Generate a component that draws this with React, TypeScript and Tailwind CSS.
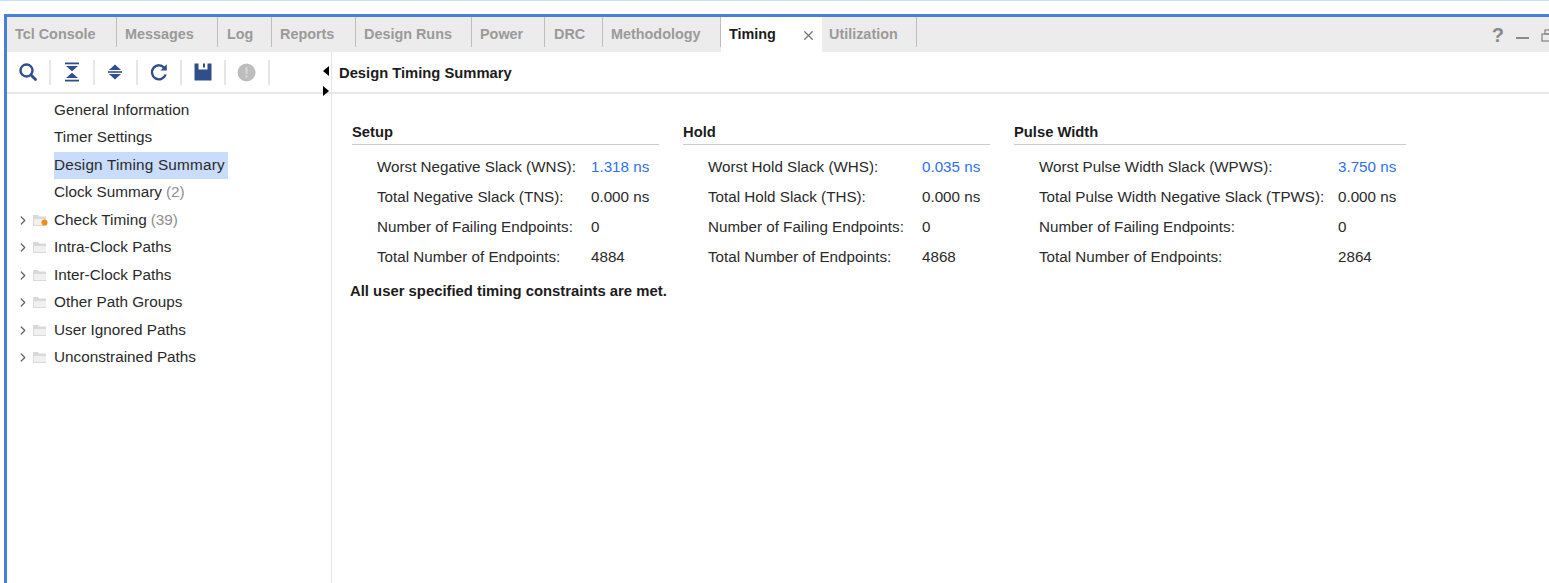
import { ChevronRight, X } from 'lucide-react'

const tabs = [
  { label: 'Tcl Console', width: 'w-[110px]', pad: 'pl-[8px]' },
  { label: 'Messages', width: 'w-[101px]', pad: 'pl-[8px]' },
  { label: 'Log', width: 'w-[54px]', pad: 'pl-[9px]' },
  { label: 'Reports', width: 'w-[84px]', pad: 'pl-[8px]' },
  { label: 'Design Runs', width: 'w-[116px]', pad: 'pl-[8px]' },
  { label: 'Power', width: 'w-[73px]', pad: 'pl-[8px]' },
  { label: 'DRC', width: 'w-[58px]', pad: 'pl-[9px]' },
  { label: 'Methodology', width: 'w-[118px]', pad: 'pl-[8px]' },
]

const treeLeaves = [
  { label: 'General Information' },
  { label: 'Timer Settings' },
  { label: 'Design Timing Summary', selected: true },
  { label: 'Clock Summary', count: '(2)' },
]

const treeFolders = [
  { label: 'Check Timing', count: '(39)', warn: true },
  { label: 'Intra-Clock Paths' },
  { label: 'Inter-Clock Paths' },
  { label: 'Other Path Groups' },
  { label: 'User Ignored Paths' },
  { label: 'Unconstrained Paths' },
]

const sections = [
  {
    title: 'Setup',
    width: 'w-[307px]',
    labelWidth: 'w-[214px]',
    rows: [
      ['Worst Negative Slack (WNS):', '1.318 ns', true],
      ['Total Negative Slack (TNS):', '0.000 ns'],
      ['Number of Failing Endpoints:', '0'],
      ['Total Number of Endpoints:', '4884'],
    ],
  },
  {
    title: 'Hold',
    width: 'w-[307px]',
    labelWidth: 'w-[214px]',
    rows: [
      ['Worst Hold Slack (WHS):', '0.035 ns', true],
      ['Total Hold Slack (THS):', '0.000 ns'],
      ['Number of Failing Endpoints:', '0'],
      ['Total Number of Endpoints:', '4868'],
    ],
  },
  {
    title: 'Pulse Width',
    width: 'w-[392px]',
    labelWidth: 'w-[299px]',
    rows: [
      ['Worst Pulse Width Slack (WPWS):', '3.750 ns', true],
      ['Total Pulse Width Negative Slack (TPWS):', '0.000 ns'],
      ['Number of Failing Endpoints:', '0'],
      ['Total Number of Endpoints:', '2864'],
    ],
  },
]

function Sep() {
  return <div className="h-[25px] w-[2px] bg-[#e6e6e6]" />
}

function ToolButton({ children }: { children: React.ReactNode }) {
  return <div className="flex h-[25px] w-[41.8px] items-center justify-center">{children}</div>
}

function Toolbar() {
  const blue = '#2f4f8a'
  return (
    <div className="flex h-[40px] items-center">
      <ToolButton>
        <svg width="20" height="20" viewBox="0 0 20 20" fill="none">
          <circle cx="8.5" cy="8.5" r="6" stroke={blue} strokeWidth="2.4" />
          <path d="M13 13l4.5 4.5" stroke={blue} strokeWidth="2.8" strokeLinecap="round" />
        </svg>
      </ToolButton>
      <Sep />
      <ToolButton>
        <svg width="16" height="20" viewBox="0 0 16 20" fill={blue}>
          <rect x="1" y="0.5" width="14" height="1.8" />
          <path d="M2 4h12L8 9.2z" />
          <path d="M8 10.8l6 5.2H2z" />
          <rect x="1" y="17.7" width="14" height="1.8" />
        </svg>
      </ToolButton>
      <Sep />
      <ToolButton>
        <svg width="16" height="20" viewBox="0 0 16 20" fill={blue}>
          <path d="M8 2.5l6 5.5H2z" />
          <rect x="1" y="9.2" width="14" height="1.6" />
          <path d="M2 12h12l-6 5.5z" />
        </svg>
      </ToolButton>
      <Sep />
      <ToolButton>
        <svg width="20" height="20" viewBox="0 0 20 20" fill="none">
          <path d="M15.6 6.2A7 7 0 1 0 16.6 12.5" stroke={blue} strokeWidth="2.4" />
          <path d="M17.8 2.2v6.4h-6.4z" fill={blue} />
        </svg>
      </ToolButton>
      <Sep />
      <ToolButton>
        <svg width="20" height="20" viewBox="0 0 20 20" fill={blue}>
          <path d="M1.5 1.5h17v17h-17zM5.5 1.5v6h9v-6h-2.5v4h-2v-4z" fillRule="evenodd" />
        </svg>
      </ToolButton>
      <Sep />
      <ToolButton>
        <svg width="19" height="19" viewBox="0 0 19 19">
          <circle cx="9.5" cy="9.5" r="9" fill="#bdbdbd" />
          <rect x="8.4" y="4" width="2.2" height="7" fill="#d6d6d6" />
          <rect x="8.4" y="12.4" width="2.2" height="2.2" fill="#d6d6d6" />
        </svg>
      </ToolButton>
      <Sep />
    </div>
  )
}

function FolderIcon({ warn }: { warn?: boolean }) {
  return (
    <svg width="17" height="13" viewBox="0 0 17 13" className="mr-[5px] shrink-0">
      <path d="M1 1h5l1 1.5h7V12H1z" fill="#d9d9d9" />
      <rect x="2" y="5" width="12" height="6" fill="#f0f0f0" />
      {warn && <circle cx="12.5" cy="8.5" r="3" fill="#f08c14" />}
    </svg>
  )
}

function Tree() {
  return (
    <div className="flex flex-col text-[15.3px]">
      {treeLeaves.map((leaf) => (
        <div key={leaf.label} className="flex h-[27.5px] items-center pl-[47px]">
          <span className={`flex h-[27.5px] items-center ${leaf.selected ? 'w-[174px] whitespace-nowrap bg-[#c9dcfb] tracking-[0.2px]' : ''}`}>
            {leaf.label}
            {leaf.count && <span className="ml-[4px] text-[#8e8e8e]">{leaf.count}</span>}
          </span>
        </div>
      ))}
      {treeFolders.map((folder) => (
        <div key={folder.label} className="flex h-[27.5px] items-center pl-[9px]">
          <ChevronRight className="mr-[2px] h-[17px] w-[14px] shrink-0 text-[#666666]" strokeWidth={2.2} />
          <FolderIcon warn={folder.warn} />
          {folder.label}
          {folder.count && <span className="ml-[4px] text-[#8e8e8e]">{folder.count}</span>}
        </div>
      ))}
    </div>
  )
}

export default function App() {
  return (
    <div className="h-[583px] w-[1549px] overflow-hidden bg-white font-['Liberation_Sans',Arial,sans-serif] text-[15.2px] text-[#2a2a2a]">
      <div className="h-[1px] bg-[#c8defb]" />
      <div className="h-[13px]" />
      <div className="ml-[4px] flex h-[569px] flex-col border-l-[3px] border-t-[3px] border-[#4a7fd6]">
        {/* Tab bar */}
        <div className="flex h-[35px] shrink-0 items-start bg-[#ececec] text-[14.4px] font-bold text-[#9a9a9a]">
          {tabs.map((tab) => (
            <div
              key={tab.label}
              className={`${tab.width} ${tab.pad} flex h-[30px] shrink-0 items-center border-r-[1px] border-[#bdbdbd] pt-[5px]`}
            >
              {tab.label}
            </div>
          ))}
          <div className="flex h-[35px] w-[101px] shrink-0 items-center justify-between bg-white pl-[8px] pr-[6px] text-[#1c1c1c]">
            <span>Timing</span>
            <X className="mt-[2px] h-[15px] w-[15px] text-[#777777]" strokeWidth={2.2} />
          </div>
          <div className="flex h-[30px] w-[95px] shrink-0 items-center border-r-[1px] border-[#bdbdbd] pl-[7px] pt-[5px]">
            Utilization
          </div>
          <div className="ml-auto flex h-[35px] items-center gap-[8px] overflow-hidden text-[#8a8a8a]">
            <span className="mr-[4px] text-[20px]">?</span>
            <div className="mt-[7px] h-[2px] w-[13px] bg-[#8a8a8a]" />
            <svg width="8" height="14" viewBox="0 0 8 14" fill="none" stroke="#8a8a8a" strokeWidth="1.3" className="ml-[4px]">
              <rect x="1" y="6" width="10" height="7" />
              <rect x="4" y="2" width="6" height="4" />
            </svg>
          </div>
        </div>

        <div className="flex min-h-0 flex-1">
          {/* Left pane */}
          <div className="relative w-[325px] shrink-0 border-r-[1px] border-[#e4e4e4]">
            <Toolbar />
            <div className="h-[2px] bg-[#e8e8e8]" />
            <div className="pt-[2.5px]">
              <Tree />
            </div>
            <div className="absolute right-[2px] top-[14px] h-0 w-0 border-y-[5px] border-r-[6px] border-y-transparent border-r-black" />
            <div className="absolute right-[2px] top-[34px] h-0 w-0 border-y-[5px] border-l-[6px] border-y-transparent border-l-black" />
          </div>

          {/* Right pane */}
          <div className="flex-1">
            <div className="flex h-[40px] items-center pl-[7px] pt-[3px] text-[14.75px] font-bold text-[#1c1c1c]">Design Timing Summary</div>
            <div className="h-[2px] bg-[#e8e8e8]" />
            <div className="pl-[18px] pt-[28px]">
              <div className="flex items-start gap-[24px] pl-[2px]">
                {sections.map((section) => (
                  <div key={section.title} className={`${section.width} shrink-0`}>
                    <div className="flex h-[23px] items-center border-b-[1px] border-[#cccccc] pb-[1px] text-[14.75px] font-bold text-[#1c1c1c]">
                      <span>{section.title}</span>
                    </div>
                    <div className="pt-[7px]">
                      {section.rows.map(([label, value, link]) => (
                        <div key={String(label)} className="flex h-[30px] items-center pl-[25px]">
                          <span className={`${section.labelWidth} shrink-0 whitespace-nowrap`}>{label}</span>
                          <span className={link ? 'text-[#2f6fed]' : ''}>{value}</span>
                        </div>
                      ))}
                    </div>
                  </div>
                ))}
              </div>
              <div className="mt-[8px] text-[14.85px] font-bold text-[#1c1c1c]">All user specified timing constraints are met.</div>
            </div>
          </div>
        </div>
      </div>
    </div>
  )
}
